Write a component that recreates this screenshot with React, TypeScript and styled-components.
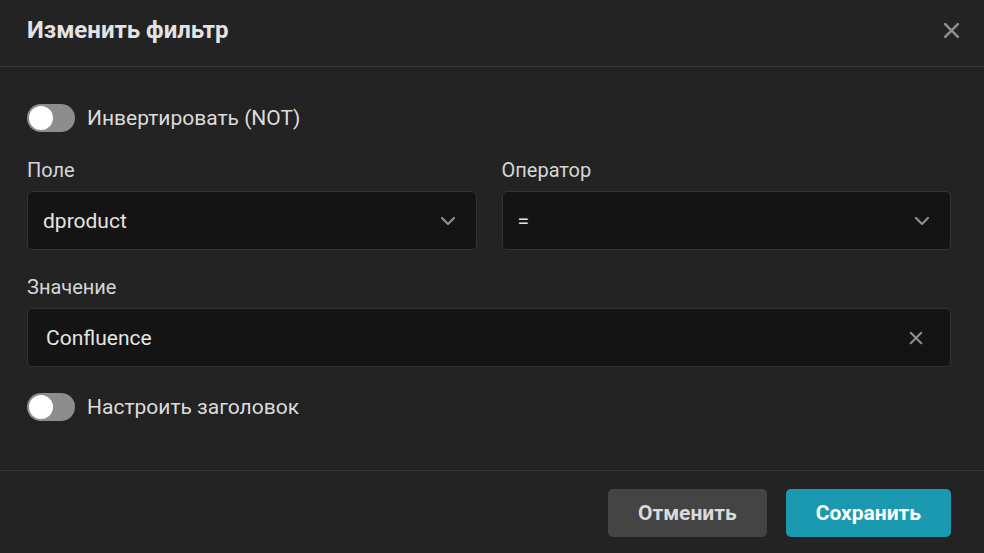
import React from 'react';
import styled, { createGlobalStyle } from 'styled-components';

const GlobalStyle = createGlobalStyle`
  html, body {
    margin: 0;
    padding: 0;
    background: #232323;
    font-family: Roboto, "Noto Sans", sans-serif;
  }
  * { box-sizing: border-box; }
`;

const Dialog = styled.div`
  width: 984px;
  height: 553px;
  background: #232323;
  display: flex;
  flex-direction: column;
`;

const Header = styled.div`
  height: 67px;
  display: flex;
  align-items: center;
  justify-content: space-between;
  padding: 0 24px 6px 27px;
  border-bottom: 1px solid #3a3a3a;
`;

const Title = styled.h2`
  margin: 0;
  font-size: 24px;
  font-weight: 700;
  color: #e2e2e2;
`;

const IconButton = styled.button`
  background: none;
  border: none;
  padding: 0;
  display: flex;
  align-items: center;
  justify-content: center;
  color: #8e8e8e;
  cursor: pointer;
`;

const Body = styled.div`
  flex: 1;
  display: flex;
  flex-direction: column;
  padding: 37px 33px 0 27px;
`;

const ToggleRow = styled.label`
  display: flex;
  align-items: center;
  gap: 12px;
  font-size: 21px;
  color: #dcdcdc;
  height: 28px;
`;

const Track = styled.span<{ on?: boolean }>`
  width: 48px;
  height: 28px;
  border-radius: 14px;
  background: ${p => (p.on ? '#1b99b0' : '#8d8d8d')};
  position: relative;
  flex-shrink: 0;
`;

const Knob = styled.span<{ on?: boolean }>`
  position: absolute;
  top: 2px;
  left: ${p => (p.on ? '22px' : '2px')};
  width: 24px;
  height: 24px;
  border-radius: 50%;
  background: #ffffff;
`;

const Row = styled.div`
  display: grid;
  grid-template-columns: 1fr 1fr;
  gap: 25px;
  margin-top: 27px;
`;

const Field = styled.div<{ mt?: number }>`
  display: flex;
  flex-direction: column;
  margin-top: ${p => p.mt ?? 0}px;
`;

const Label = styled.div`
  font-size: 20px;
  color: #d6d6d6;
  line-height: 22px;
  margin-bottom: 10px;
`;

const Box = styled.div<{ padLeft?: number; padRight?: number }>`
  height: 59px;
  background: #141414;
  border: 1px solid #333333;
  border-radius: 5px;
  display: flex;
  align-items: center;
  justify-content: space-between;
  padding: 0 ${p => p.padRight ?? 20}px 0 ${p => p.padLeft ?? 15}px;
  font-size: 21px;
  color: #e4e4e4;
`;

const Spacer = styled.div<{ h: number }>`
  height: ${p => p.h}px;
  flex-shrink: 0;
`;

const Footer = styled.div`
  height: 83px;
  border-top: 1px solid #3a3a3a;
  display: flex;
  align-items: flex-start;
  justify-content: flex-end;
  gap: 19px;
  padding: 18px 33px 0 0;
`;

const Button = styled.button<{ primary?: boolean }>`
  height: 48px;
  padding: 0 30px;
  border: none;
  border-radius: 5px;
  font-family: Roboto, sans-serif;
  font-size: 21px;
  font-weight: 700;
  background: ${p => (p.primary ? '#1b99b0' : '#444444')};
  color: ${p => (p.primary ? '#ffffff' : '#dadada')};
  cursor: pointer;
`;

const Chevron = () => (
  <svg width="16" height="10" viewBox="0 0 16 10" fill="none">
    <path d="M2 2l6 6 6-6" stroke="#8e8e8e" strokeWidth="2.2" strokeLinecap="round" strokeLinejoin="round" />
  </svg>
);

const Cross = ({ size }: { size: number }) => (
  <svg width={size} height={size} viewBox="0 0 16 16" fill="none">
    <path d="M2 2l12 12M14 2L2 14" stroke="currentColor" strokeWidth="2.4" strokeLinecap="round" />
  </svg>
);

const Toggle = ({ label, on }: { label: string; on?: boolean }) => (
  <ToggleRow>
    <Track on={on}>
      <Knob on={on} />
    </Track>
    {label}
  </ToggleRow>
);

export default function App() {
  return (
    <>
      <GlobalStyle />
      <Dialog>
        <Header>
          <Title>Изменить фильтр</Title>
          <IconButton>
            <Cross size={17} />
          </IconButton>
        </Header>
        <Body>
          <Toggle label="Инвертировать (NOT)" />
          <Row>
            <Field>
              <Label>Поле</Label>
              <Box>
                dproduct
                <Chevron />
              </Box>
            </Field>
            <Field>
              <Label>Оператор</Label>
              <Box>
                =
                <Chevron />
              </Box>
            </Field>
          </Row>
          <Field mt={26}>
            <Label>Значение</Label>
            <Box padLeft={18} padRight={27}>
              Confluence
              <IconButton>
                <Cross size={14} />
              </IconButton>
            </Box>
          </Field>
          <Spacer h={26} />
          <Toggle label="Настроить заголовок" />
        </Body>
        <Footer>
          <Button>Отменить</Button>
          <Button primary>Сохранить</Button>
        </Footer>
      </Dialog>
    </>
  );
}
